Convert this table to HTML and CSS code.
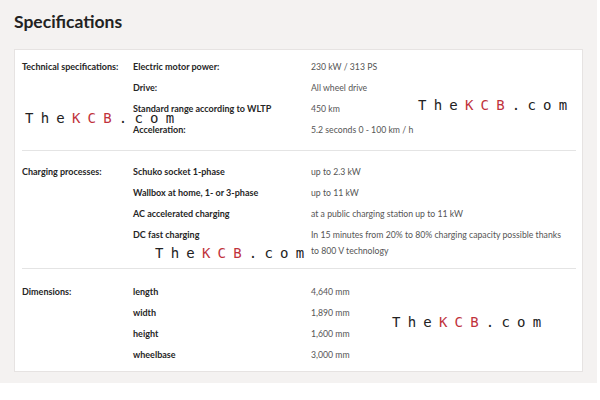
FILE: index.html
```
<!DOCTYPE html>
<html>
<head>
<meta charset="utf-8">
<link rel="stylesheet" href="styles.css">
</head>
<body>
<div class="page">
  <h1 class="title">Specifications</h1>
  <div class="card">
    <div class="group group-first">
      <div class="label">Technical specifications:</div>
      <div class="rows">
        <div class="row"><span class="key">Electric motor power:</span><span class="val">230 kW / 313 PS</span></div>
        <div class="row"><span class="key">Drive:</span><span class="val">All wheel drive</span></div>
        <div class="row"><span class="key">Standard range according to WLTP</span><span class="val">450 km</span></div>
        <div class="row"><span class="key">Acceleration:</span><span class="val">5.2 seconds 0 - 100 km / h</span></div>
      </div>
    </div>
    <div class="group group-mid">
      <div class="label">Charging processes:</div>
      <div class="rows">
        <div class="row"><span class="key">Schuko socket 1-phase</span><span class="val">up to 2.3 kW</span></div>
        <div class="row"><span class="key">Wallbox at home, 1- or 3-phase</span><span class="val">up to 11 kW</span></div>
        <div class="row"><span class="key">AC accelerated charging</span><span class="val">at a public charging station up to 11 kW</span></div>
        <div class="row"><span class="key">DC fast charging</span><span class="val">In 15 minutes from 20% to 80% charging capacity possible thanks to 800 V technology</span></div>
      </div>
    </div>
    <div class="group group-last">
      <div class="label">Dimensions:</div>
      <div class="rows">
        <div class="row"><span class="key">length</span><span class="val">4,640 mm</span></div>
        <div class="row"><span class="key">width</span><span class="val">1,890 mm</span></div>
        <div class="row"><span class="key">height</span><span class="val">1,600 mm</span></div>
        <div class="row"><span class="key">wheelbase</span><span class="val">3,000 mm</span></div>
      </div>
    </div>
  </div>
  <div class="wm wm1">The<b>KCB</b>.com</div>
  <div class="wm wm2">The<b>KCB</b>.com</div>
  <div class="wm wm3">The<b>KCB</b>.com</div>
  <div class="wm wm4">The<b>KCB</b>.com</div>
</div>
</body>
</html>
```
FILE: styles.css
```
* { box-sizing: border-box; }
html, body { margin: 0; padding: 0; background: #ffffff; }
body { font-family: Lato, "Noto Sans", sans-serif; }
.page {
  position: relative;
  width: 597px;
  height: 383px;
  background: #f4f2f1;
  padding: 10px 14px 0 14px;
}
.title {
  margin: 0;
  font-size: 17.5px;
  line-height: 24px;
  font-weight: 700;
  color: #222;
  height: 39px;
}
.card {
  width: 569px;
  background: #fff;
  border: 1px solid #e6e3e2;
  padding: 0 6px 0 7px;
}
.group {
  display: grid;
  grid-template-columns: 111px 1fr;
  border-bottom: 1px solid #e4e4e4;
}
.group-first { padding: 6px 0 10px; }
.group-mid { padding: 10px 0 7px; }
.group-last { padding: 12px 0 6px; border-bottom: none; }
.label {
  font-size: 9px;
  font-weight: 700;
  color: #262626;
  line-height: 16px;
  padding-top: 2.5px;
}
.row {
  display: grid;
  grid-template-columns: 178px 1fr;
  font-size: 9px;
  line-height: 16px;
  padding: 2.5px 0;
}
.key { font-weight: 700; color: #262626; }
.val { color: #555; font-size: 8.7px; padding-right: 8px; }
.wm {
  position: absolute;
  font-family: "DejaVu Sans Mono", monospace;
  font-size: 14px;
  line-height: 14px;
  letter-spacing: 7.2px;
  color: #222;
  white-space: nowrap;
}
.wm b { font-weight: 400; color: #c0323c; }
.wm1 { left: 25px; top: 111px; }
.wm2 { left: 418px; top: 98px; }
.wm3 { left: 155px; top: 246px; }
.wm4 { left: 392px; top: 315px; }
```
